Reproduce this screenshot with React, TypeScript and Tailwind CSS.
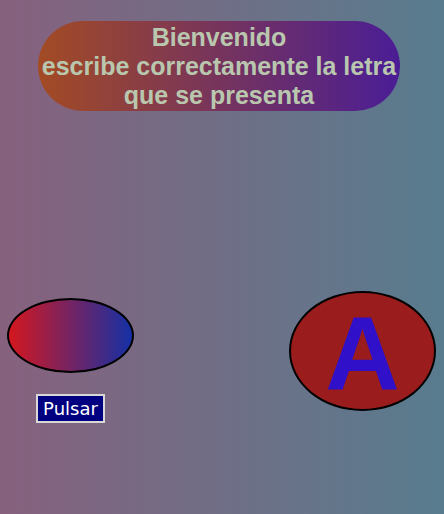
import React from "react";

const App: React.FC = () => {
  const [letter] = React.useState<string>("A");
  return (
    <div className="min-h-[514px] w-full bg-linear-to-r/srgb from-[#87617e] to-[#587c8e] pt-[21px] font-['Liberation_Sans',Arial,sans-serif]">
      <div className="ml-[38px] flex h-[90px] w-[362px] flex-col items-center justify-center rounded-[45px] bg-linear-to-r/srgb from-[#a34b24] to-[#4a1d95] text-center text-[25px] font-bold leading-[29px] text-[#b9c7ae]">
        <span>Bienvenido</span>
        <span>escribe correctamente la letra</span>
        <span>que se presenta</span>
      </div>

      <div className="mt-[180px] flex flex-row justify-between pl-[7px] pr-[8px]">
        <div className="flex flex-col pt-[7px]">
          <div className="h-[75px] w-[127px] rounded-[50%] border-2 border-black bg-linear-to-r/srgb from-[#d4171f] to-[#1530a5]" />
          <button className="ml-[29px] mt-[21px] h-[29px] w-[69px] border-2 border-[#d8d8d8] bg-[#000080] text-[18px] leading-none text-white font-['DejaVu_Sans',Verdana,sans-serif]">
            Pulsar
          </button>
        </div>
        <div className="flex h-[120px] w-[147px] items-center justify-center rounded-[50%] border-2 border-black bg-[#9a1c1c]">
          <span className="pt-[4px] text-[103px] font-bold leading-none text-[#3010c8]">
            {letter}
          </span>
        </div>
      </div>
    </div>
  );
};

export default App;
